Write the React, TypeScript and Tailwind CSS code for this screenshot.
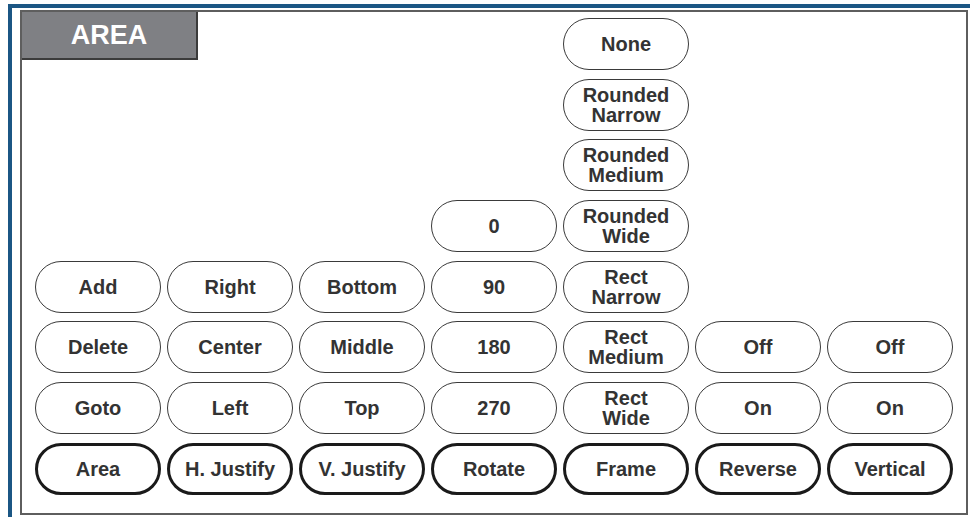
import React from "react";

type Cell = { label: string[]; main?: boolean } | null;

const rows: Cell[][] = [
  [null, null, null, null, { label: ["None"] }, null, null],
  [null, null, null, null, { label: ["Rounded", "Narrow"] }, null, null],
  [null, null, null, null, { label: ["Rounded", "Medium"] }, null, null],
  [null, null, null, { label: ["0"] }, { label: ["Rounded", "Wide"] }, null, null],
  [
    { label: ["Add"] },
    { label: ["Right"] },
    { label: ["Bottom"] },
    { label: ["90"] },
    { label: ["Rect", "Narrow"] },
    null,
    null,
  ],
  [
    { label: ["Delete"] },
    { label: ["Center"] },
    { label: ["Middle"] },
    { label: ["180"] },
    { label: ["Rect", "Medium"] },
    { label: ["Off"] },
    { label: ["Off"] },
  ],
  [
    { label: ["Goto"] },
    { label: ["Left"] },
    { label: ["Top"] },
    { label: ["270"] },
    { label: ["Rect", "Wide"] },
    { label: ["On"] },
    { label: ["On"] },
  ],
  [
    { label: ["Area"], main: true },
    { label: ["H. Justify"], main: true },
    { label: ["V. Justify"], main: true },
    { label: ["Rotate"], main: true },
    { label: ["Frame"], main: true },
    { label: ["Reverse"], main: true },
    { label: ["Vertical"], main: true },
  ],
];

function Key({ cell }: { cell: Cell }) {
  if (!cell) return <div />;
  return (
    <button
      className={`flex flex-col items-center justify-center rounded-full bg-white text-center text-[20px] font-bold leading-[20px] text-[#333] ${
        cell.main ? "border-[3px] border-[#1a1a1a]" : "border-[1.5px] border-[#3a3a3a]"
      }`}
    >
      {cell.label.map((line) => (
        <span key={line}>{line}</span>
      ))}
    </button>
  );
}

export default function App() {
  return (
    <div
      className="w-[970px] h-[517px] bg-white pt-[4px] pl-[8px] overflow-hidden"
      style={{ fontFamily: '"Liberation Sans", Arial, sans-serif' }}
    >
      <div className="h-full border-t-[4px] border-l-[4px] border-[#1b5684] pt-[2px] pl-[8px]">
        <div className="relative w-[948px] h-[505px] border-2 border-[#5e5e5e] pl-[13px] pt-[6px]">
          {/* tab label on the panel corner */}
          <div className="absolute left-0 top-0 flex w-[176px] h-[48px] items-center justify-center bg-[#7f8084] border-r-2 border-b-2 border-[#3b3b3b]">
            <span className="text-[27px] font-bold text-white leading-none">AREA</span>
          </div>

          <div className="grid grid-cols-[repeat(7,126px)] auto-rows-[52px] gap-x-[6px] gap-y-[8.7px]">
            {rows.flatMap((row, r) =>
              row.map((cell, c) => <Key key={`${r}-${c}`} cell={cell} />)
            )}
          </div>
        </div>
      </div>
    </div>
  );
}
